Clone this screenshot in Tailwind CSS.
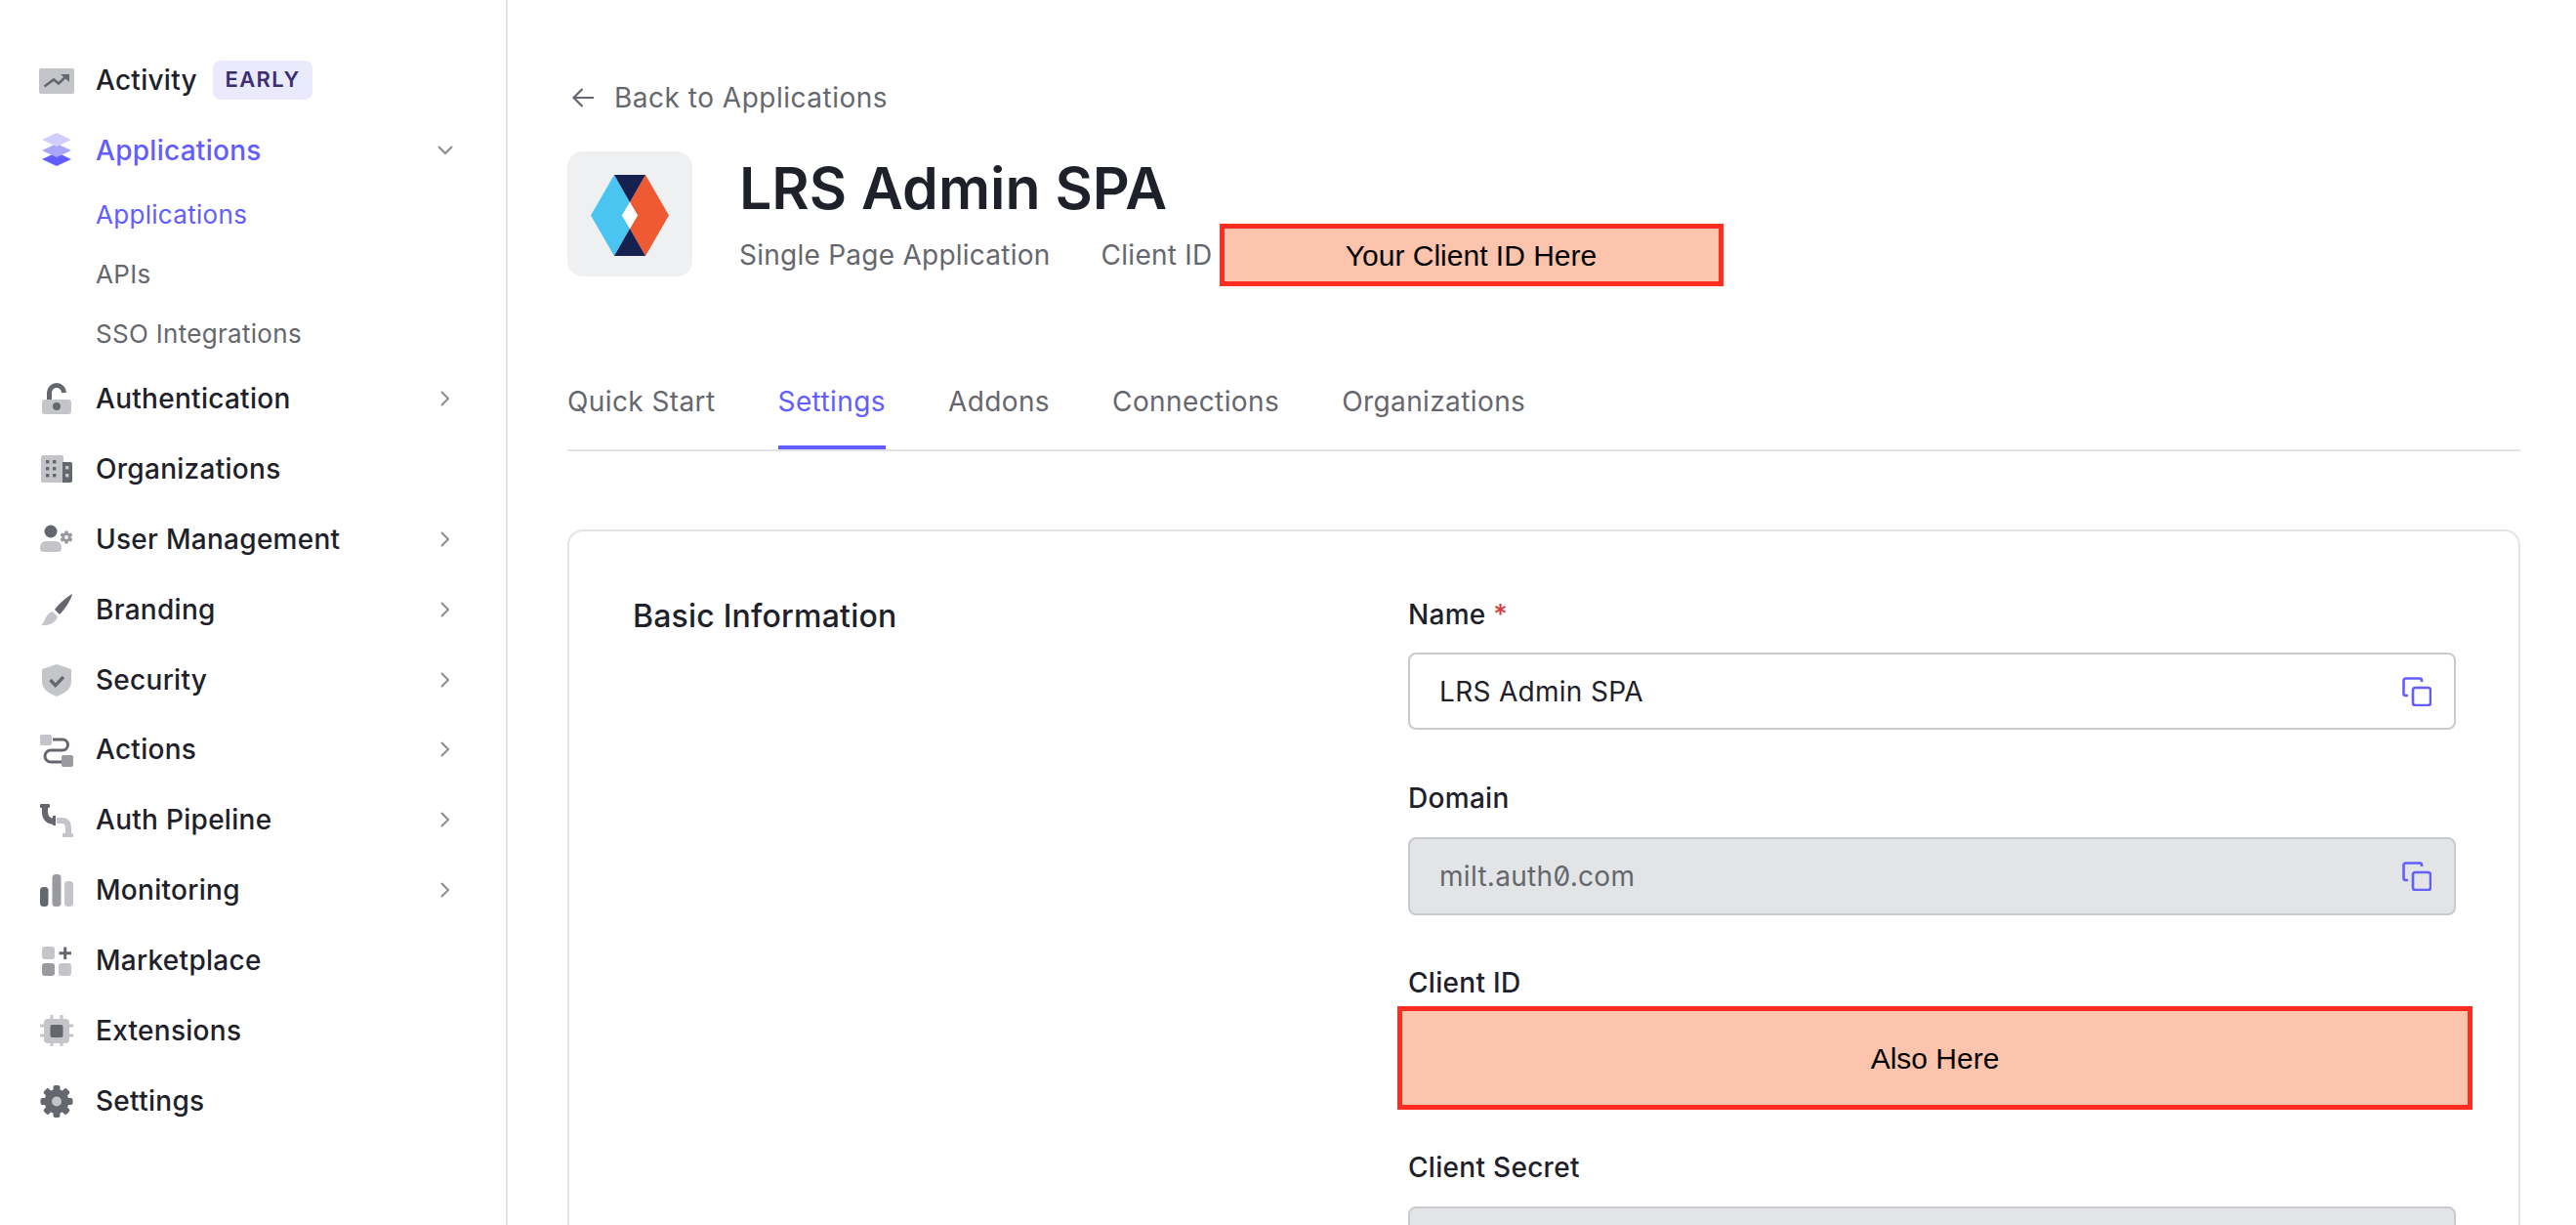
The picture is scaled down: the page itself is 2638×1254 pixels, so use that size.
<!DOCTYPE html>
<html lang="en">

<head>
    <meta charset="UTF-8">
    <script src="https://cdn.jsdelivr.net/npm/@tailwindcss/browser@4"></script>
    <title>LRS Admin SPA</title>
</head>

<body class="bg-white font-[Inter,sans-serif] text-[#1e212a]">

    <div class="flex h-[1254px] overflow-hidden">

        <!-- sidebar -->
        <nav class="w-[520px] shrink-0 border-r-2 border-[#e3e3e5] pt-[45px] pl-[40px] pr-[55px] text-[28px] font-[450] tracking-[0.28px]">

            <a class="flex items-center h-[73px]">
                <svg class="w-[36px] h-[36px] shrink-0" viewBox="0 0 36 36"><rect x="0" y="6" width="36" height="26" rx="2" fill="#c4c5c8"/><path d="M5.5 24.5l9.5-7 5 4 9-8.5" fill="none" stroke="#65676e" stroke-width="2.6"/><path d="M22 12h9v8z" fill="#65676e"/></svg>
                <span class="ml-[22px]">Activity</span>
                <span class="ml-[16px] flex items-center justify-center w-[102px] h-[40px] rounded-[8px] bg-[#ebe9fc] text-[#3a2f70] text-[22px] font-semibold tracking-[0.06em]">EARLY</span>
            </a>

            <a class="flex items-center h-[72px] text-[#635dff]">
                <svg class="w-[36px] h-[36px] shrink-0 -translate-y-px" viewBox="0 0 36 36"><path d="M18 21l15 7-15 7-15-7z" fill="#635dff"/><path d="M18 12l15 7-15 7-15-7z" fill="#a9a6fd"/><path d="M18 1l15 7-15 7-15-7z" fill="#d0cefd"/></svg>
                <span class="ml-[22px]">Applications</span>
                <svg class="ml-auto -mr-[1px] w-[16px] h-[10px]" viewBox="0 0 16 10"><path d="M1 1l7 7 7-7" fill="none" stroke="#8b8c91" stroke-width="2"/></svg>
            </a>
            <a class="flex items-center h-[60px] pl-[58px] text-[26px] font-normal tracking-[0.3px] text-[#635dff] -translate-y-px">Applications</a>
            <a class="flex items-center h-[61px] pl-[58px] text-[26px] font-normal tracking-[0.3px] text-[#65676e]">APIs</a>
            <a class="flex items-center h-[61px] pl-[58px] text-[26px] font-normal tracking-[0.3px] text-[#65676e]">SSO Integrations</a>

            <a class="flex items-center h-[71.9px]">
                <svg class="w-[36px] h-[36px] shrink-0" viewBox="0 0 36 36"><path d="M10.5 22V12a7.5 7.5 0 0 1 15 0" fill="none" stroke="#65676e" stroke-width="5"/><rect x="3" y="19" width="30" height="15" rx="3" fill="#c4c5c8"/><circle cx="18" cy="26" r="4" fill="#65676e"/></svg>
                <span class="ml-[22px]">Authentication</span>
                <svg class="ml-auto mr-[2px] w-[10px] h-[16px]" viewBox="0 0 10 16"><path d="M1 1l7 7-7 7" fill="none" stroke="#8b8c91" stroke-width="2"/></svg>
            </a>

            <a class="flex items-center h-[71.9px]">
                <svg class="w-[36px] h-[36px] shrink-0" viewBox="0 0 36 36"><rect x="2" y="4" width="23" height="28" rx="2" fill="#c4c5c8"/><path d="M24 11h8a2 2 0 0 1 2 2v17a2 2 0 0 1-2 2h-8z" fill="#65676e"/><g fill="#65676e"><rect x="7" y="9" width="3.4" height="3.4"/><rect x="14" y="9" width="3.4" height="3.4"/><rect x="7" y="16" width="3.4" height="3.4"/><rect x="14" y="16" width="3.4" height="3.4"/><rect x="7" y="23" width="3.4" height="3.4"/><rect x="14" y="23" width="3.4" height="3.4"/></g><rect x="27" y="15" width="3.4" height="3.4" fill="#c4c5c8"/><rect x="27" y="23" width="3.4" height="3.4" fill="#c4c5c8"/></svg>
                <span class="ml-[22px]">Organizations</span>
            </a>

            <a class="flex items-center h-[71.9px]">
                <svg class="w-[36px] h-[36px] shrink-0" viewBox="0 0 36 36"><circle cx="12" cy="10" r="6.5" fill="#65676e"/><path d="M1 26a6 6 0 0 1 6-6h10a6 6 0 0 1 6 6v1a4 4 0 0 1-4 4H5a4 4 0 0 1-4-4z" fill="#c4c5c8"/><g fill="#9a9ba0"><rect x="26.2" y="9.5" width="3.6" height="13" rx="1"/><rect x="26.2" y="9.5" width="3.6" height="13" rx="1" transform="rotate(60 28 16)"/><rect x="26.2" y="9.5" width="3.6" height="13" rx="1" transform="rotate(120 28 16)"/><circle cx="28" cy="16" r="4.8"/></g><circle cx="28" cy="16" r="1.9" fill="#fff"/></svg>
                <span class="ml-[22px]">User Management</span>
                <svg class="ml-auto mr-[2px] w-[10px] h-[16px]" viewBox="0 0 10 16"><path d="M1 1l7 7-7 7" fill="none" stroke="#8b8c91" stroke-width="2"/></svg>
            </a>

            <a class="flex items-center h-[71.9px]">
                <svg class="w-[36px] h-[36px] shrink-0" viewBox="0 0 36 36"><path d="M34 2C30 4 20 12 16 18l5 5C26 18 33 8 34 2z" fill="#65676e"/><path d="M14 20l5 5C18 31 10 35 2 34 6 32 6 22 14 20z" fill="#c4c5c8"/></svg>
                <span class="ml-[22px]">Branding</span>
                <svg class="ml-auto mr-[2px] w-[10px] h-[16px]" viewBox="0 0 10 16"><path d="M1 1l7 7-7 7" fill="none" stroke="#8b8c91" stroke-width="2"/></svg>
            </a>

            <a class="flex items-center h-[71.9px]">
                <svg class="w-[36px] h-[36px] shrink-0" viewBox="0 0 36 36"><path d="M18 2l15 5v13c0 8-8 12-15 15-7-3-15-7-15-15V7z" fill="#c4c5c8"/><path d="M11.5 18l5.2 5.6L25 15" fill="none" stroke="#65676e" stroke-width="3.4"/></svg>
                <span class="ml-[22px]">Security</span>
                <svg class="ml-auto mr-[2px] w-[10px] h-[16px]" viewBox="0 0 10 16"><path d="M1 1l7 7-7 7" fill="none" stroke="#8b8c91" stroke-width="2"/></svg>
            </a>

            <a class="flex items-center h-[71.9px]">
                <svg class="w-[36px] h-[36px] shrink-0" viewBox="0 0 36 36"><path d="M14 8h10a5.5 5.5 0 0 1 0 11H12a6 6 0 0 0 0 12h11" fill="none" stroke="#65676e" stroke-width="3"/><rect x="1" y="3" width="12" height="11" rx="2" fill="#c4c5c8"/><rect x="23" y="24" width="12" height="12" rx="2" fill="#9a9ba0"/></svg>
                <span class="ml-[22px]">Actions</span>
                <svg class="ml-auto mr-[2px] w-[10px] h-[16px]" viewBox="0 0 10 16"><path d="M1 1l7 7-7 7" fill="none" stroke="#8b8c91" stroke-width="2"/></svg>
            </a>

            <a class="flex items-center h-[71.9px]">
                <svg class="w-[36px] h-[36px] shrink-0" viewBox="0 0 36 36"><rect x="1" y="2" width="10" height="4" rx="1" fill="#65676e"/><path d="M6 4v6q0 9 9 10" fill="none" stroke="#65676e" stroke-width="6"/><rect x="14" y="14" width="3" height="10" fill="#65676e"/><path d="M18 19h5q7 0 7 8v7" fill="none" stroke="#c4c5c8" stroke-width="6"/><rect x="24" y="32" width="11" height="4" rx="1" fill="#c4c5c8"/></svg>
                <span class="ml-[22px]">Auth Pipeline</span>
                <svg class="ml-auto mr-[2px] w-[10px] h-[16px]" viewBox="0 0 10 16"><path d="M1 1l7 7-7 7" fill="none" stroke="#8b8c91" stroke-width="2"/></svg>
            </a>

            <a class="flex items-center h-[71.9px]">
                <svg class="w-[36px] h-[36px] shrink-0" viewBox="0 0 36 36"><rect x="1" y="15" width="8.5" height="20" rx="3.5" fill="#65676e"/><rect x="13.5" y="2" width="9" height="33" rx="3.5" fill="#9a9ba0"/><rect x="26" y="9" width="9" height="26" rx="3.5" fill="#c4c5c8"/></svg>
                <span class="ml-[22px]">Monitoring</span>
                <svg class="ml-auto mr-[2px] w-[10px] h-[16px]" viewBox="0 0 10 16"><path d="M1 1l7 7-7 7" fill="none" stroke="#8b8c91" stroke-width="2"/></svg>
            </a>

            <a class="flex items-center h-[71.9px]">
                <svg class="w-[36px] h-[36px] shrink-0" viewBox="0 0 36 36"><rect x="3" y="4" width="13" height="13" rx="3" fill="#c4c5c8"/><rect x="3" y="21" width="13" height="13" rx="3" fill="#9a9ba0"/><rect x="20" y="21" width="13" height="13" rx="3" fill="#c4c5c8"/><path d="M26.7 4.5v12.5M20.5 10.7h12.5" stroke="#65676e" stroke-width="3"/></svg>
                <span class="ml-[22px]">Marketplace</span>
            </a>

            <a class="flex items-center h-[71.9px]">
                <svg class="w-[36px] h-[36px] shrink-0" viewBox="0 0 36 36"><path d="M13 2v32M23 2v32M1 13h34M1 23h34" stroke="#c4c5c8" stroke-width="3"/><rect x="5" y="6" width="26" height="25" rx="4" fill="#c4c5c8"/><rect x="11.5" y="12" width="13" height="13" rx="2" fill="#65676e"/></svg>
                <span class="ml-[22px]">Extensions</span>
            </a>

            <a class="flex items-center h-[71.9px]">
                <svg class="w-[36px] h-[36px] shrink-0" viewBox="0 0 36 36"><g fill="#65676e"><circle cx="18" cy="18.5" r="12.5"/><rect x="14.5" y="2" width="7" height="33" rx="2"/><rect x="14.5" y="2" width="7" height="33" rx="2" transform="rotate(45 18 18.5)"/><rect x="14.5" y="2" width="7" height="33" rx="2" transform="rotate(90 18 18.5)"/><rect x="14.5" y="2" width="7" height="33" rx="2" transform="rotate(135 18 18.5)"/></g><circle cx="18" cy="18.5" r="5" fill="#c4c5c8"/></svg>
                <span class="ml-[22px]">Settings</span>
            </a>

        </nav>

        <!-- main -->
        <main class="flex-1 pt-[80px] pl-[61px] pr-[57px] text-[#65676e]">

            <a class="flex items-center h-[40px] text-[28px] tracking-[0.5px]">
                <svg class="w-[24px] h-[22px] ml-[4px] shrink-0" viewBox="0 0 24 22"><path d="M23 11H3M11.5 2L2.5 11l9 9" fill="none" stroke="#65676e" stroke-width="2.2"/></svg>
                <span class="ml-[20px]">Back to Applications</span>
            </a>

            <div class="flex mt-[35px] h-[128px]">
                <div class="w-[128px] h-[128px] shrink-0 rounded-[16px] bg-[#eff0f2]">
                    <svg class="w-[128px] h-[128px]" viewBox="0 0 128 128">
                        <path d="M24 65.5L48 24 64 52 56 65.5 64 79 48 107z" fill="#4ac5f2"/>
                        <path d="M80 24l24 41.5L80 107 64 79 72 65.5 64 52z" fill="#ef5a32"/>
                        <path d="M48 24h32L64 52zM64 79l16 28H48z" fill="#16214f"/>
                        <path d="M64 52l8 13.5L64 79 56 65.5z" fill="#fff"/>
                    </svg>
                </div>
                <div class="ml-[48px]">
                    <h1 class="mt-[2px] h-[72px] leading-[72px] text-[59px] font-semibold text-[#1e212a]">LRS Admin SPA</h1>
                    <div class="flex items-center text-[28px] tracking-[0.25px]">
                        <span>Single Page Application</span>
                        <span class="ml-[52px]">Client ID</span>
                        <span class="ml-[7px] flex items-center justify-center w-[516px] h-[64px] border-[5px] border-[#ff2d20] bg-[#fdc4ad] font-['Liberation_Sans',sans-serif] text-[30px] tracking-normal text-black">Your Client ID Here</span>
                    </div>
                </div>
            </div>

            <div class="flex gap-[64px] mt-[108px] border-b-2 border-[#e3e3e5] text-[28px] tracking-[0.4px]">
                <a class="h-[69px] leading-[40px]">Quick Start</a>
                <a class="h-[69px] leading-[40px] border-b-4 border-[#635dff] text-[#635dff]">Settings</a>
                <a class="h-[69px] leading-[40px]">Addons</a>
                <a class="h-[69px] leading-[40px]">Connections</a>
                <a class="h-[69px] leading-[40px]">Organizations</a>
            </div>

            <section class="flex mt-[80px] h-[900px] border-2 border-[#e3e3e5] rounded-[16px] pt-[65px] pl-[65px] pr-[64px]">
                <h2 class="w-[794px] shrink-0 mt-[2px] h-[40px] leading-[40px] text-[32px] font-[450] tracking-[0.2px] text-[#1e212a]">Basic Information</h2>
                <div class="flex-1 text-[28px] tracking-[0.3px]">

                    <label class="block h-[40px] leading-[40px] font-[450] text-[#1e212a]">Name <span class="text-[#d93a3a]">*</span></label>
                    <div class="flex items-center justify-between mt-[19px] h-[79px] pl-[30px] pr-[23px] border-2 border-[#c9cace] rounded-[8px] text-[#1e212a]">
                        <span>LRS Admin SPA</span>
                        <svg class="w-[30px] h-[30px]" viewBox="0 0 30 30"><path d="M20 5V3.5a2 2 0 0 0-2-2H3.5a2 2 0 0 0-2 2V17a2 2 0 0 0 2 2H6" fill="none" stroke="#635dff" stroke-width="2.6"/><rect x="11" y="11" width="18" height="18" rx="2.5" fill="none" stroke="#635dff" stroke-width="2.6"/></svg>
                    </div>

                    <label class="block mt-[50px] h-[40px] leading-[40px] font-[450] text-[#1e212a]">Domain</label>
                    <div class="flex items-center justify-between mt-[20px] h-[80px] pl-[30px] pr-[23px] border-2 border-[#c9cace] rounded-[8px] bg-[#e3e4e6] text-[#65676e]">
                        <span class="slashed-zero">milt.auth0.com</span>
                        <svg class="w-[30px] h-[30px]" viewBox="0 0 30 30"><path d="M20 5V3.5a2 2 0 0 0-2-2H3.5a2 2 0 0 0-2 2V17a2 2 0 0 0 2 2H6" fill="none" stroke="#635dff" stroke-width="2.6"/><rect x="11" y="11" width="18" height="18" rx="2.5" fill="none" stroke="#635dff" stroke-width="2.6"/></svg>
                    </div>

                    <label class="block mt-[49px] h-[40px] leading-[40px] font-[450] text-[#1e212a]">Client ID</label>
                    <div class="flex items-center justify-center mt-[4px] -ml-[11px] -mr-[17px] h-[106px] border-[5px] border-[#ff2d20] bg-[#fdc4ad] font-['Liberation_Sans',sans-serif] text-[30px] tracking-normal text-black">Also Here</div>

                    <label class="block mt-[39px] h-[40px] leading-[40px] font-[450] text-[#1e212a]">Client Secret</label>
                    <div class="mt-[20px] h-[80px] border-2 border-[#c9cace] rounded-[8px] bg-[#e3e4e6]"></div>

                </div>
            </section>

        </main>
    </div>

</body>

</html>
